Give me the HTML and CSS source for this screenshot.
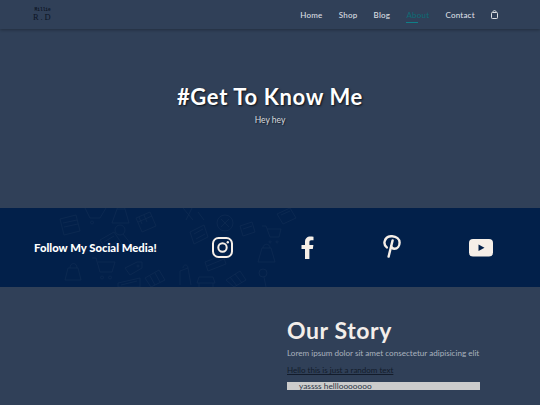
FILE: index.html
```html
<!DOCTYPE html>
<html lang="en">
<head>
  <meta charset="UTF-8">
  <meta name="viewport" content="width=device-width, initial-scale=1.0">
  <title>About</title>
  <link rel="stylesheet" href="styles.css">
</head>
<body>
  <header class="topbar">
    <a class="logo" href="#">
      <span class="logo-small">Millie</span>
      <span class="logo-big">R.D</span>
    </a>
    <nav class="menu">
      <a href="#">Home</a>
      <a href="#">Shop</a>
      <a href="#">Blog</a>
      <a href="#" class="active">About</a>
      <a href="#">Contact</a>
      <a href="#" class="bag" aria-label="Cart">
        <svg width="7" height="9" viewBox="0 0 7 9" fill="none" stroke="#dcdfe2" stroke-width="1">
          <rect x="0.5" y="2.5" width="6" height="6" rx="0.8"/>
          <path d="M2 2.5V1.6C2 0.3 5 0.3 5 1.6V2.5"/>
        </svg>
      </a>
    </nav>
  </header>

  <section class="hero">
    <h1>#Get To Know Me</h1>
    <p>Hey hey</p>
  </section>

  <section class="social">
    <svg class="pattern" width="245" height="79" viewBox="55 208 245 79" fill="none" stroke="#fff" stroke-width="0.8" stroke-linejoin="round">
      <!-- top row -->
      <path d="M60 219l16-4 4 16-16 4z M63 223l14-3 M64 227l14-3"/>
      <path d="M85 208l5 10h10l6-10 M92 221a1.5 1.5 0 1 0 .1 0"/>
      <path d="M112 223l5-14h8l4 14z M117 209c0-4 8-4 8 0"/>
      <path d="M136 218l14-6 6 14-14 6z M138 222l14-6 M142 224l-3-7 M147 222l-3-7"/>
      <circle cx="120" cy="230" r="5"/>
      <path d="M123 234l8 10"/>
      <path d="M100 240l14-8 8 12-14 8z M104 242l10-6 M108 247l10-6"/>
      <!-- bottom row -->
      <path d="M65 280l3-12h10l3 12z M70 268c0-6 7-6 7 0"/>
      <path d="M92 258h4l4 14h12l3-10h-17 M102 276a1.5 1.5 0 1 0 .1 0 M110 276a1.5 1.5 0 1 0 .1 0"/>
      <path d="M125 268l12-6h5v6l-12 7z"/>
      <circle cx="138" cy="266" r="1"/>
      <path d="M145 278l14-8 6 10-14 7z M150 276l5 9 M155 273l5 9"/>
      <path d="M118 283l22-5v9h-22z M121 285l16-4"/>
      <!-- right half -->
      <path d="M183 208l10 12 M192 208l-6 12 M198 212l6 8"/>
      <circle cx="225" cy="223" r="8"/>
      <path d="M221 219l8 8 M229 219l-8 8"/>
      <path d="M190 232l14-7 4 12-14 7z M194 234l9-5 M196 239l9-5"/>
      <path d="M240 226l12-4 3 10-12 4z M243 229l9-3"/>
      <path d="M262 226h4l4 11h9l2-8h-14 M270 241a1 1 0 1 0 .1 0 M277 241a1 1 0 1 0 .1 0"/>
      <path d="M277 214l13-6 6 10-13 6z M281 215l9-4"/>
      <path d="M258 262l4-14h9l4 14z M263 248c0-5 7-5 7 0"/>
      <path d="M205 262l18-7 3 9-18 7z M207 266l17-7"/>
      <path d="M180 285v-14l8-3 3 17 M183 268c0-4 5-4 5 0"/>
      <path d="M197 283l2-6h14l2 6z M199 283v4 M213 283v4"/>
      <path d="M226 280l14-9 6 9-12 7z M230 277l7 9 M235 274l7 9"/>
      <circle cx="263" cy="273" r="4"/>
      <path d="M264 277l2 10"/>
    </svg>
    <h2>Follow My Social Media!</h2>
    <div class="social-icons">
      <a href="#" class="icon-slot" aria-label="Instagram">
        <svg width="21" height="21" viewBox="0 0 21 21" fill="none" stroke="#f6efe8" stroke-width="2">
          <rect x="1" y="1" width="19" height="19" rx="5.5"/>
          <circle cx="10.5" cy="10.5" r="4.2"/>
          <circle cx="15.8" cy="5.2" r="1.2" fill="#f6efe8" stroke="none"/>
        </svg>
      </a>
      <a href="#" class="icon-slot" aria-label="Facebook">
        <svg width="13" height="23" viewBox="0 0 13 23" fill="#f6efe8">
          <path d="M4 23V13H0.5V9H4V6C4 2.4 6.2 0.5 9.3 0.5C10.7 0.5 12 0.6 12.5 0.7V4.2H10.4C8.8 4.2 8.4 5 8.4 6.2V9H12.4L11.8 13H8.4V23Z"/>
        </svg>
      </a>
      <a href="#" class="icon-slot icon-pin" aria-label="Pinterest">
        <svg width="18" height="23" viewBox="0 0 18 23" fill="none" stroke="#f6efe8" stroke-width="2.4" stroke-linecap="round">
          <path d="M3.8 12.4C1.8 10.8 1.1 8.6 1.6 6.4C2.5 2.8 5.8 1 9.2 1.2C13.4 1.4 16.6 4 16.6 7.6C16.6 11.2 14.4 13.8 11.4 13.8C9.8 13.8 8.6 13 8.2 11.4"/>
          <path d="M9.6 5.4L5.6 21.6" stroke-width="2.4"/>
        </svg>
      </a>
      <a href="#" class="icon-slot icon-yt" aria-label="YouTube">
        <svg width="24" height="18" viewBox="0 0 24 18">
          <rect width="24" height="17.5" rx="4" fill="#f6efe8"/>
          <path d="M9.5 5.5L15.5 8.8L9.5 12.1Z" fill="#02204a"/>
        </svg>
      </a>
    </div>
  </section>

  <section class="story">
    <div class="story-blank"></div>
    <div class="story-text">
      <h2>Our Story</h2>
      <p class="lorem">Lorem ipsum dolor sit amet consectetur adipisicing elit</p>
      <p class="random">Hello this is just a random text</p>
      <p class="bar">yassss helllooooooo</p>
    </div>
  </section>
</body>
</html>
```

FILE: styles.css
```css
* {
  box-sizing: border-box;
}
html, body {
  height: 100%;
  overflow: hidden;
}
body {
  margin: 0;
  font-family: "Lato", "Liberation Sans", sans-serif;
  background-color: #304058;
  color: #fff;
}
a {
  color: inherit;
  text-decoration: none;
}

.topbar {
  height: 29px;
  display: flex;
  justify-content: space-between;
  align-items: center;
  padding: 0 42px 0 33px;
  box-shadow: 0 1px 3px rgba(0, 0, 0, 0.3);
}
.logo {
  display: flex;
  flex-direction: column;
  align-items: center;
  color: #0d1524;
  line-height: 1;
}
.logo-small {
  font-family: "Liberation Mono", monospace;
  font-size: 4.5px;
  font-weight: bold;
}
.logo-big {
  font-family: "Liberation Serif", serif;
  font-size: 8.5px;
  letter-spacing: 1.8px;
}
.menu {
  display: flex;
  align-items: center;
  gap: 16.25px;
  font-size: 8px;
  font-weight: 500;
  color: #dcdfe2;
  letter-spacing: 0.2px;
}
.menu a {
  padding: 2px 0;
}
.menu .active {
  position: relative;
  color: #0f6a74;
}
.menu .active::after {
  content: "";
  position: absolute;
  left: 0;
  bottom: -1px;
  width: 12px;
  height: 1px;
  background-color: #0f7f88;
}
.bag {
  display: flex;
}

.hero {
  height: 179px;
  padding-top: 54px;
  text-align: center;
}
.hero h1 {
  margin: 0;
  font-size: 22px;
  line-height: 28px;
  font-weight: 700;
  letter-spacing: 0.65px;
  text-shadow: 1px 1px 2px rgba(0, 0, 0, 0.75);
}
.hero p {
  margin: 3px 0 0;
  font-size: 8.5px;
  line-height: 12px;
  color: #d8dbdf;
  text-shadow: 1px 1px 1px rgba(0, 0, 0, 0.5);
}

.social {
  position: relative;
  height: 79px;
  display: flex;
  align-items: center;
  padding-left: 34px;
  background-color: #02204a;
}
.pattern {
  position: absolute;
  left: 55px;
  top: 0;
  opacity: 0.045;
}
.social h2 {
  position: relative;
  margin: 0 0 1px;
  width: 146.5px;
  font-size: 11.3px;
  font-weight: 900;
  white-space: nowrap;
}
.social-icons {
  position: relative;
  display: flex;
  flex: 1;
}
.icon-slot {
  width: 84.5px;
  display: flex;
  justify-content: center;
  align-items: center;
}
.icon-pin {
  margin-bottom: 2px;
}
.icon-yt {
  margin-left: 5px;
}

.story {
  display: flex;
  padding-top: 30px;
}
.story-blank {
  width: 287px;
}
.story-text {
  width: 193px;
}
.story-text h2 {
  margin: 0;
  font-size: 23px;
  line-height: 27px;
  font-weight: 700;
  letter-spacing: 0.6px;
  color: #f3eeea;
}
.lorem {
  margin: 3px 0 0;
  font-size: 8.1px;
  line-height: 12px;
  color: #a9b2be;
  white-space: nowrap;
}
.random {
  margin: 5px 0 0;
  font-size: 8px;
  line-height: 12px;
  color: #131c2b;
  text-decoration: underline;
  white-space: nowrap;
}
.bar {
  margin: 6px 0 0;
  height: 8px;
  padding-left: 12px;
  font-size: 8.3px;
  line-height: 8px;
  color: #2b3444;
  background-color: #cccccc;
}
```
